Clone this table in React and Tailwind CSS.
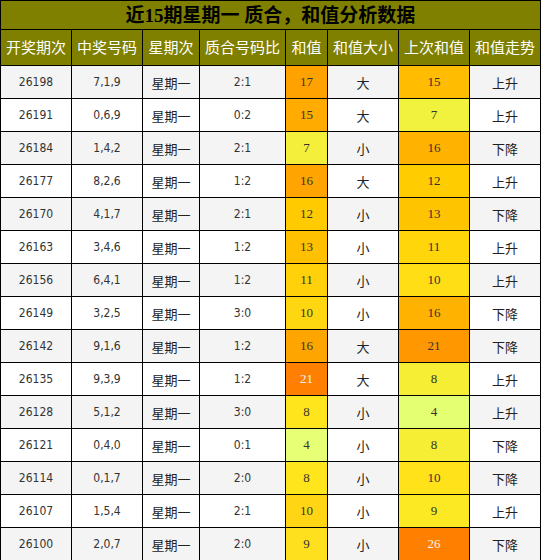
const rows = [
  ["26198", "7,1,9", "2:1", "17", "bg-[#ffa200]", "大", "15", "bg-[#ffbc00]", "上升"],
  ["26191", "0,6,9", "0:2", "15", "bg-[#ffab00]", "大", "7", "bg-[#f1f23e]", "上升"],
  ["26184", "1,4,2", "2:1", "7", "bg-[#f4ef3a]", "小", "16", "bg-[#ffb300]", "下降"],
  ["26177", "8,2,6", "1:2", "16", "bg-[#ffa400]", "大", "12", "bg-[#ffcc00]", "上升"],
  ["26170", "4,1,7", "2:1", "12", "bg-[#ffca00]", "小", "13", "bg-[#ffc400]", "下降"],
  ["26163", "3,4,6", "1:2", "13", "bg-[#ffc000]", "小", "11", "bg-[#ffd60a]", "上升"],
  ["26156", "6,4,1", "1:2", "11", "bg-[#ffd10a]", "小", "10", "bg-[#ffde15]", "上升"],
  ["26149", "3,2,5", "3:0", "10", "bg-[#ffd710]", "小", "16", "bg-[#ffb300]", "下降"],
  ["26142", "9,1,6", "1:2", "16", "bg-[#ffa500]", "大", "21", "bg-[#ff9800]", "下降"],
  ["26135", "9,3,9", "1:2", "21", "bg-[#ff8000] text-[#f5f5f5]", "大", "8", "bg-[#f6ee34]", "上升"],
  ["26128", "5,1,2", "3:0", "8", "bg-[#ffe61c]", "小", "4", "bg-[#e5ff72]", "上升"],
  ["26121", "0,4,0", "0:1", "4", "bg-[#e7ff75]", "小", "8", "bg-[#f6ee34]", "下降"],
  ["26114", "0,1,7", "2:0", "8", "bg-[#ffe61c]", "小", "10", "bg-[#ffe21a]", "下降"],
  ["26107", "1,5,4", "2:1", "10", "bg-[#ffd514]", "小", "9", "bg-[#fde824]", "上升"],
  ["26100", "2,0,7", "2:0", "9", "bg-[#ffe01e]", "小", "26", "bg-[#ff8000] text-[#f5f5f5]", "下降"],
];

const heads = [
  ["开奖期次", "w-[71px]"],
  ["中奖号码", "w-[71px]"],
  ["星期次", "w-[57px]"],
  ["质合号码比", "w-[86px]"],
  ["和值", "w-[42px]"],
  ["和值大小", "w-[71px]"],
  ["上次和值", "w-[71px]"],
  ["和值走势", "w-[71px]"],
];

const cell = "h-[33px] p-0 border-r border-b border-black text-center align-middle";
const numCell = `${cell} text-[12px] text-[#333] font-['DejaVu_Sans_Condensed','DejaVu_Sans',sans-serif]`;
const cjkCell = `${cell} pt-[2px] text-[13px] text-[#222] font-['Noto_Sans_CJK_SC',sans-serif]`;
const colorCell = `${cell} text-[13px] text-[#333] font-['Liberation_Serif',serif]`;

export default function App() {
  return (
    <div className="w-[541px] bg-white">
      {/* Title */}
      <div className="h-[29px] border-t border-x border-black bg-[#808000] flex items-center justify-center text-[19px] font-bold text-black leading-none font-['Liberation_Serif','Noto_Sans_CJK_SC',serif]">
        近15期星期一 质合，和值分析数据
      </div>

      <table className="table-fixed border-separate border-spacing-0 border-l border-t border-black w-[541px]">
        <thead>
          <tr>
            {heads.map(([h, w]) => (
              <th
                key={h}
                className={`${w} h-[36px] p-0 border-r border-b border-black bg-[#808000] text-white text-[15px] font-normal text-center align-middle whitespace-nowrap font-['Noto_Sans_CJK_SC',sans-serif]`}
              >
                {h}
              </th>
            ))}
          </tr>
        </thead>
        <tbody>
          {rows.map((r, i) => (
            <tr key={r[0]} className={i % 2 === 0 ? "bg-[#f4f4f4]" : "bg-white"}>
              <td className={numCell}>{r[0]}</td>
              <td className={numCell}>{r[1]}</td>
              <td className={cjkCell}>星期一</td>
              <td className={numCell}>{r[2]}</td>
              <td className={`${colorCell} ${r[4]}`}>{r[3]}</td>
              <td className={cjkCell}>{r[5]}</td>
              <td className={`${colorCell} ${r[7]}`}>{r[6]}</td>
              <td className={cjkCell}>{r[8]}</td>
            </tr>
          ))}
        </tbody>
      </table>
    </div>
  );
}
